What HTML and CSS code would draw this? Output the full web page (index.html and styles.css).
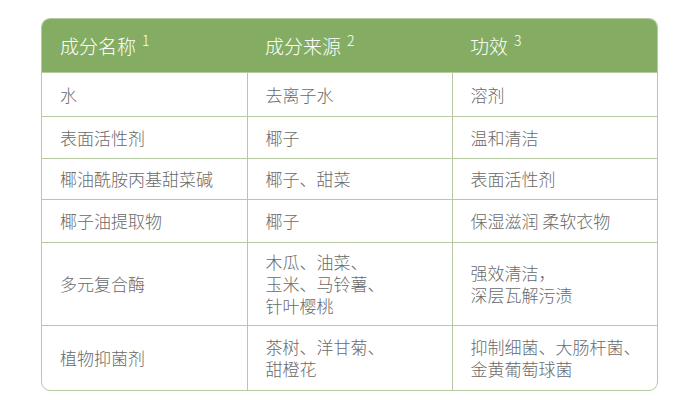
FILE: index.html
```html
<!DOCTYPE html>
<html lang="zh">
<head>
<meta charset="utf-8">
<link rel="stylesheet" href="styles.css">
</head>
<body>
<div class="card">
  <table class="tbl">
    <thead>
      <tr>
        <th>成分名称<sup>1</sup></th>
        <th>成分来源<sup>2</sup></th>
        <th>功效<sup>3</sup></th>
      </tr>
    </thead>
    <tbody>
      <tr class="r1"><td>水</td><td>去离子水</td><td>溶剂</td></tr>
      <tr class="r2"><td>表面活性剂</td><td>椰子</td><td>温和清洁</td></tr>
      <tr class="r3"><td>椰油酰胺丙基甜菜碱</td><td>椰子、甜菜</td><td>表面活性剂</td></tr>
      <tr class="r4"><td>椰子油提取物</td><td>椰子</td><td>保湿滋润 柔软衣物</td></tr>
      <tr class="r5"><td>多元复合酶</td><td>木瓜、油菜、<br>玉米、马铃薯、<br>针叶樱桃</td><td>强效清洁，<br>深层瓦解污渍</td></tr>
      <tr class="r6"><td>植物抑菌剂</td><td>茶树、洋甘菊、<br>甜橙花</td><td>抑制细菌、大肠杆菌、<br>金黄葡萄球菌</td></tr>
    </tbody>
  </table>
</div>
</body>
</html>
```
FILE: styles.css
```css
html, body {
  margin: 0;
  padding: 0;
  background: #ffffff;
}
body {
  font-family: "Noto Sans CJK SC", "Noto Sans", sans-serif;
  font-weight: 300;
  color: #6a6a6a;
}
.card {
  margin: 18px 0 0 41px;
  width: 615px;
  border: 1px solid #b6c9a2;
  border-radius: 9px;
  overflow: hidden;
}
.tbl {
  width: 100%;
  border-collapse: collapse;
  table-layout: fixed;
}
.tbl th {
  background: #84ad63;
  color: #ffffff;
  font-weight: 300;
  font-size: 19px;
  text-align: left;
  height: 53px;
  padding: 0 0 0 18px;
  vertical-align: middle;
}
.tbl th sup {
  font-size: 14px;
  margin-left: 6px;
  vertical-align: 8px;
  line-height: 0;
}
.tbl td {
  font-size: 17px;
  line-height: 22px;
  padding: 0 0 0 18px;
  border-top: 1px solid #b6c9a2;
  border-left: 1px solid #b6c9a2;
  vertical-align: middle;
}
.tbl td:first-child {
  border-left: none;
}
.r1 td { height: 43px; }
.r2 td { height: 41px; }
.r3 td { height: 40px; }
.r4 td { height: 42px; }
.r5 td { height: 82px; }
.r6 td { height: 64px; }
```
